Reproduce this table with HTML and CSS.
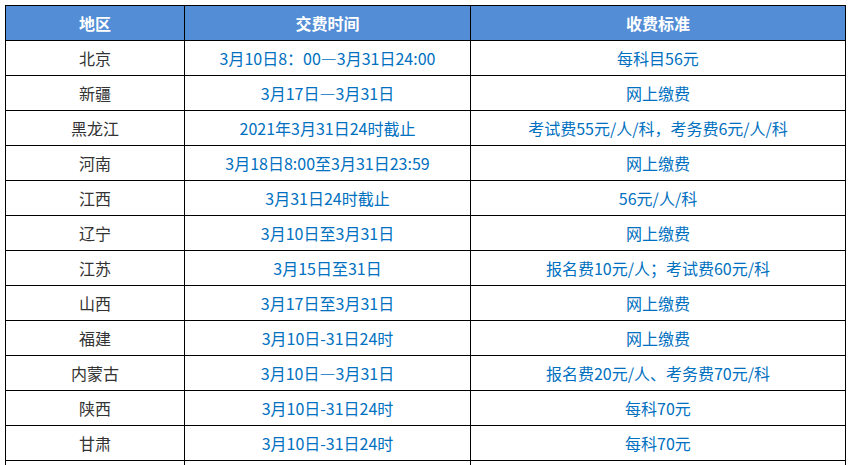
FILE: index.html
```html
<!DOCTYPE html>
<html lang="zh-CN">
<head>
<meta charset="utf-8">
<link rel="stylesheet" href="styles.css">
</head>
<body>
<div class="wrap">
<table class="fee">
<colgroup><col class="c1"><col class="c2"><col class="c3"></colgroup>
<thead>
<tr><th>地区</th><th>交费时间</th><th>收费标准</th></tr>
</thead>
<tbody>
<tr><td class="region">北京</td><td>3月10日8：00—3月31日24:00</td><td>每科目56元</td></tr>
<tr><td class="region">新疆</td><td>3月17日—3月31日</td><td>网上缴费</td></tr>
<tr><td class="region">黑龙江</td><td>2021年3月31日24时截止</td><td>考试费55元/人/科，考务费6元/人/科</td></tr>
<tr><td class="region">河南</td><td>3月18日8:00至3月31日23:59</td><td>网上缴费</td></tr>
<tr><td class="region">江西</td><td>3月31日24时截止</td><td>56元/人/科</td></tr>
<tr><td class="region">辽宁</td><td>3月10日至3月31日</td><td>网上缴费</td></tr>
<tr><td class="region">江苏</td><td>3月15日至31日</td><td>报名费10元/人；考试费60元/科</td></tr>
<tr><td class="region">山西</td><td>3月17日至3月31日</td><td>网上缴费</td></tr>
<tr><td class="region">福建</td><td>3月10日-31日24时</td><td>网上缴费</td></tr>
<tr><td class="region">内蒙古</td><td>3月10日—3月31日</td><td>报名费20元/人、考务费70元/科</td></tr>
<tr><td class="region">陕西</td><td>3月10日-31日24时</td><td>每科70元</td></tr>
<tr><td class="region">甘肃</td><td>3月10日-31日24时</td><td>每科70元</td></tr>
<tr><td class="region">&nbsp;</td><td>&nbsp;</td><td>&nbsp;</td></tr>
</tbody>
</table>
</div>
</body>
</html>
```
FILE: styles.css
```css
html, body {
  margin: 0;
  padding: 0;
  background: #fff;
}
.wrap {
  padding: 5px 0 0 5px;
}
.fee {
  border-collapse: collapse;
  table-layout: fixed;
  width: 840px;
  font-family: "Microsoft YaHei", "Noto Sans CJK SC", sans-serif;
  font-size: 16px;
}
.c1 { width: 179px; }
.c2 { width: 286px; }
.c3 { width: 375px; }
.fee th, .fee td {
  border: 1px solid #000;
  height: 34px;
  padding: 0;
  text-align: center;
  vertical-align: middle;
  line-height: 20px;
}
.fee th {
  background: #538dd5;
  color: #fff;
  font-weight: bold;
}
.fee td {
  color: #0070c0;
}
.fee td.region {
  color: #333;
}
```
